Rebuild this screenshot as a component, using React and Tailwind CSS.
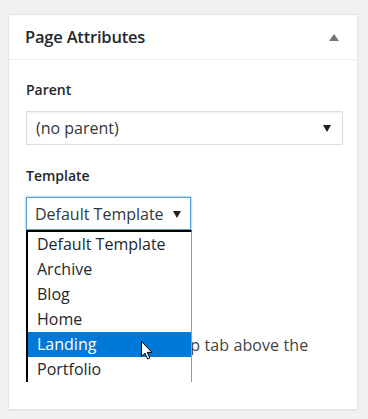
import React from "react";

const templates = ["Default Template", "Archive", "Blog", "Home", "Landing", "Portfolio", "Sidebar"];

function Cursor() {
  return (
    <svg width="12" height="19" viewBox="0 0 12 19" className="absolute left-[113px] top-[9px]">
      <path
        d="M0.5 0.5 L0.5 15.5 L4 12.2 L6.6 18 L8.8 17 L6.3 11.4 L11 11.4 Z"
        fill="#fff"
        stroke="#000"
        strokeWidth="1"
        strokeLinejoin="round"
      />
    </svg>
  );
}

function Caret({ className }) {
  return (
    <svg width="8" height="8" viewBox="0 0 8 8" className={className}>
      <path d="M0 1 L8 1 L4 8 Z" fill="#222" />
    </svg>
  );
}

export default function App() {
  return (
    <div className="w-[368px] h-[419px] bg-[#f1f1f1] pt-[14px] pl-[8px] font-['Open_Sans',sans-serif] text-[#32373c]">
      <div className="w-[350px] h-[396px] bg-white border border-[#e5e5e5] shadow-[0_1px_1px_rgba(0,0,0,0.04)]">
        <div className="h-[45px] border-b border-[#eeeeee] flex items-center justify-between pl-[16px] pr-[18px]">
          <h2 className="text-[16.5px] font-semibold text-[#23282d] tracking-[-0.2px]">Page Attributes</h2>
          <svg width="10" height="7" viewBox="0 0 10 7">
            <path d="M0 7 L5 0 L10 7 Z" fill="#72777c" />
          </svg>
        </div>

        <div className="pl-[17px] pr-[14px] pt-[20px]">
          <p className="text-[14px] font-semibold text-[#23282d] leading-[20px]">Parent</p>
          <div className="mt-[11px] h-[34px] w-[317px] border border-[#dddddd] flex items-center justify-between pl-[9px] pr-[11px] shadow-[inset_0_1px_2px_rgba(0,0,0,0.07)]">
            <span className="text-[16px] text-[#32373c]">(no parent)</span>
            <Caret />
          </div>

          <p className="mt-[21px] text-[14px] font-semibold text-[#23282d] leading-[20px]">Template</p>
          <div className="relative mt-[11px] w-[165px]">
            <div className="h-[33px] border border-[#5b9dd9] flex items-center justify-between pl-[8px] pr-[9px] shadow-[0_0_2px_rgba(30,140,190,0.8)]">
              <span className="text-[16px] text-[#32373c]">Default Template</span>
              <Caret />
            </div>
            <div className="absolute z-10 left-0 top-[33px] w-[166px] h-[152px] overflow-hidden bg-white border-l-2 border-t-2 border-l-black border-t-black border-r border-r-[#7a9fd6]">
              {templates.map((t) => (
                <div
                  key={t}
                  className={
                    t === "Landing"
                      ? "relative h-[25px] leading-[25px] pl-[9px] text-[16px] bg-[#0078d7] text-white"
                      : "h-[25px] leading-[25px] pl-[9px] text-[16px] text-[#23282d]"
                  }
                >
                  {t}
                  {t === "Landing" && <Cursor />}
                </div>
              ))}
            </div>
          </div>

          <p className="mt-[20px] text-[14px] font-semibold text-[#23282d] leading-[20px]">Order</p>
          <div className="mt-[10px] h-[32px] w-[80px] border border-[#dddddd] pl-[8px] text-[15px] leading-[30px]">0</div>
          <p className="mt-[21px] text-[16px] leading-[25px] text-[#444] tracking-[0.1px]">
            <span className="tracking-[-0.42px]">Need help? Use the Hel</span>p tab above the screen title.
          </p>
        </div>
      </div>
    </div>
  );
}
